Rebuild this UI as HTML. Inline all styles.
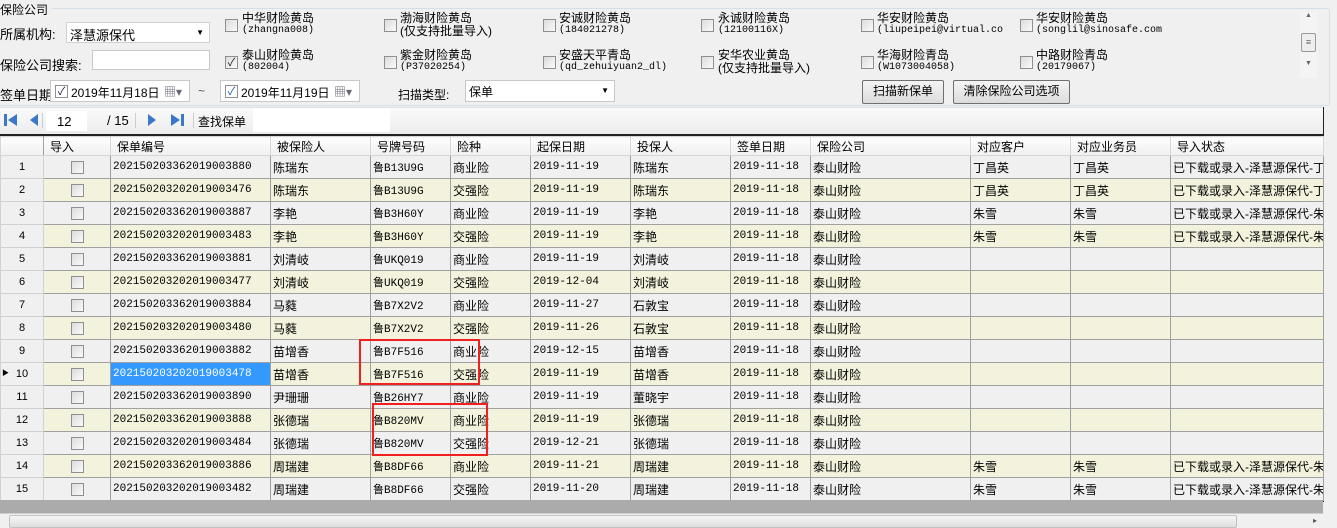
<!DOCTYPE html>
<html><head><meta charset="utf-8">
<style>
*{margin:0;padding:0;box-sizing:border-box}
body{width:1337px;height:528px;overflow:hidden;background:#f0f0f0;font-family:"Liberation Sans","Noto Sans CJK SC","WenQuanYi Zen Hei",sans-serif;font-size:12px;color:#000;position:relative}
.a{position:absolute;white-space:nowrap}
.cb{position:absolute;width:13px;height:13px;border:1px solid #8f8f8f;background:linear-gradient(135deg,#dcdcdc,#fafafa)}
.ck{font-size:11px;line-height:12px;color:#223;text-align:center}
.lbl{position:absolute;font-size:12px;line-height:13px;white-space:nowrap}
.lbl small{font-family:"Liberation Mono",monospace;font-size:10px;display:block;line-height:11px}
.inp{position:absolute;background:#fff;border:1px solid #c8c8c8}
.btn{position:absolute;border:1px solid #707070;border-radius:2px;background:linear-gradient(#f4f4f4,#dcdcdc);text-align:center;line-height:20px}
table{position:absolute;left:0;top:136px;border-collapse:collapse;table-layout:fixed;width:1323px}
td{border:1px solid #a0a0a0;height:23px;padding:0 2px;white-space:nowrap;overflow:hidden;font-size:12px}
tr.h td{height:19px;background:linear-gradient(#fdfdfd,#f0f0f0);border-color:#d6d6d6;padding-left:6px}
tr.h td:first-child{border-right-color:#a0a0a0}
tr:nth-child(odd):not(.h) td{background:#f3f2dc}
td.rh{background:#f0f0f0 !important;text-align:center;font-size:11px;border-color:#d0d0d0;position:relative}
td.m{font-family:"Liberation Mono",monospace;font-size:11px}
td.c{text-align:center}
td.sel{background:#3399ff !important;color:#fff}
.rc{position:absolute;border:2px solid #f02020}
</style></head><body>
<div class="a" style="left:0;top:8px;width:1330px;height:98px;border:1px solid #d5dfe5;border-left:none;border-radius:0 3px 3px 0"></div>
<div class="a" style="left:0;top:1px;background:#f0f0f0;padding-right:4px">保险公司</div>
<div class="a" style="left:0;top:24px;font-size:13px">所属机构:</div>
<div class="inp" style="left:66px;top:22px;width:144px;height:21px;border-color:#d0d0d0"><span class="a" style="left:3px;top:2px;font-size:13px">泽慧源保代</span><span class="a" style="right:5px;top:5px;font-size:8px">▼</span></div>
<div class="a" style="left:0;top:55px;font-size:13px">保险公司搜索:</div>
<div class="inp" style="left:92px;top:50px;width:118px;height:20px"></div>
<div class="a" style="left:0;top:85px;font-size:13px">签单日期</div>
<div class="inp" style="left:50px;top:80px;width:140px;height:22px"><div class="cb ck" style="left:4px;top:4px;background:#fff">✓</div><span class="a" style="left:20px;top:3px;font-size:12px">2019年11月18日</span><span class="a" style="left:113px;top:2px;font-size:12px;color:#667">▦▾</span></div>
<div class="inp" style="left:220px;top:80px;width:140px;height:22px"><div class="cb ck" style="left:4px;top:4px;background:#fff;color:#1a56c0">✓</div><span class="a" style="left:20px;top:3px">2019年11月19日</span><span class="a" style="left:113px;top:2px;color:#667">▦▾</span></div>
<div class="a" style="left:198px;top:84px;color:#555">~</div>
<div class="a" style="left:398px;top:86px;font-size:12px">扫描类型:</div>
<div class="inp" style="left:465px;top:80px;width:150px;height:22px"><span class="a" style="left:3px;top:2px">保单</span><span class="a" style="right:5px;top:5px;font-size:8px">▼</span></div>

<div class="cb" style="left:225px;top:19px"></div><div class="lbl" style="left:242px;top:12px">中华财险黄岛<small>(zhangna008)</small></div>
<div class="cb ck" style="left:225px;top:56px">✓</div><div class="lbl" style="left:242px;top:49px">泰山财险黄岛<small>(802004)</small></div>
<div class="cb" style="left:384px;top:19px"></div><div class="lbl" style="left:400px;top:12px">渤海财险黄岛<br>(仅支持批量导入)</div>
<div class="cb" style="left:384px;top:56px"></div><div class="lbl" style="left:400px;top:49px">紫金财险黄岛<small>(P37020254)</small></div>
<div class="cb" style="left:543px;top:19px"></div><div class="lbl" style="left:559px;top:12px">安诚财险黄岛<small>(184021278)</small></div>
<div class="cb" style="left:543px;top:56px"></div><div class="lbl" style="left:559px;top:49px">安盛天平青岛<small>(qd_zehuiyuan2_dl)</small></div>
<div class="cb" style="left:701px;top:19px"></div><div class="lbl" style="left:718px;top:12px">永诚财险黄岛<small>(12100116X)</small></div>
<div class="cb" style="left:701px;top:56px"></div><div class="lbl" style="left:718px;top:49px">安华农业黄岛<br>(仅支持批量导入)</div>
<div class="cb" style="left:861px;top:19px"></div><div class="lbl" style="left:877px;top:12px">华安财险黄岛<small>(liupeipei@virtual.co</small></div>
<div class="cb" style="left:861px;top:56px"></div><div class="lbl" style="left:877px;top:49px">华海财险青岛<small>(W1073004058)</small></div>
<div class="cb" style="left:1020px;top:19px"></div><div class="lbl" style="left:1036px;top:12px">华安财险黄岛<small>(songlil@sinosafe.com</small></div>
<div class="cb" style="left:1020px;top:56px"></div><div class="lbl" style="left:1036px;top:49px">中路财险青岛<small>(20179067)</small></div>
<div class="a" style="left:1300px;top:12px;width:17px;height:66px;background:#f4f4f4;font-size:7px;color:#666;text-align:center">▲<div style="margin:14px 1px 0;height:19px;border:1px solid #999;border-radius:2px;background:#eee;font-size:9px;line-height:16px">≡</div><div style="margin-top:8px">▼</div></div>
<div class="btn" style="left:862px;top:80px;width:82px;height:24px">扫描新保单</div>
<div class="btn" style="left:953px;top:80px;width:117px;height:24px">清除保险公司选项</div>

<div class="a" style="left:0;top:107px;width:1323px;height:28px;background:linear-gradient(#fafafa,#ececec);border-top:1px solid #d8e0e5"></div>
<div class="a" style="left:1323px;top:107px;width:1px;height:395px;background:#222"></div>
<svg class="a" style="left:3px;top:113px" width="16" height="14"><rect x="1" y="1" width="3" height="12" fill="#3a78c8"/><path d="M14 1 L5 7 L14 13Z" fill="#3a78c8"/></svg>
<svg class="a" style="left:28px;top:113px" width="12" height="14"><path d="M10 1 L2 7 L10 13Z" fill="#3a78c8"/></svg>
<div class="a" style="left:42px;top:113px;width:1px;height:15px;background:#ccc"></div>
<div class="a" style="left:46px;top:111px;width:41px;height:20px;background:#fff"><span class="a" style="left:11px;top:3px;font-size:13px">12</span></div>
<div class="a" style="left:107px;top:113px;font-size:13px">/ 15</div>
<div class="a" style="left:135px;top:113px;width:1px;height:15px;background:#ccc"></div>
<svg class="a" style="left:146px;top:113px" width="12" height="14"><path d="M2 1 L10 7 L2 13Z" fill="#3a78c8"/></svg>
<svg class="a" style="left:169px;top:113px" width="16" height="14"><path d="M2 1 L11 7 L2 13Z" fill="#3a78c8"/><rect x="12" y="1" width="3" height="12" fill="#3a78c8"/></svg>
<div class="a" style="left:193px;top:113px;width:1px;height:15px;background:#ccc"></div>
<div class="a" style="left:198px;top:113px;font-size:12px">查找保单</div>
<div class="a" style="left:253px;top:108px;width:137px;height:24px;background:#fff"></div>
<div class="a" style="left:0;top:134px;width:1323px;height:2px;background:#222"></div>

<table>
<colgroup><col style="width:43px"><col style="width:67px"><col style="width:160px"><col style="width:100px"><col style="width:80px"><col style="width:80px"><col style="width:100px"><col style="width:100px"><col style="width:80px"><col style="width:160px"><col style="width:100px"><col style="width:100px"><col style="width:153px"></colgroup>
<tr class="h"><td></td><td>导入</td><td>保单编号</td><td>被保险人</td><td>号牌号码</td><td>险种</td><td>起保日期</td><td>投保人</td><td>签单日期</td><td>保险公司</td><td>对应客户</td><td>对应业务员</td><td>导入状态</td></tr>
<tr><td class="rh">1</td><td class="c"><div class="cb" style="position:relative;display:inline-block;vertical-align:middle"></div></td><td class="m">202150203362019003880</td><td>陈瑞东</td><td class="m">鲁B13U9G</td><td>商业险</td><td class="m">2019-11-19</td><td>陈瑞东</td><td class="m">2019-11-18</td><td>泰山财险</td><td>丁昌英</td><td>丁昌英</td><td>已下载或录入-泽慧源保代-丁</td></tr>
<tr><td class="rh">2</td><td class="c"><div class="cb" style="position:relative;display:inline-block;vertical-align:middle"></div></td><td class="m">202150203202019003476</td><td>陈瑞东</td><td class="m">鲁B13U9G</td><td>交强险</td><td class="m">2019-11-19</td><td>陈瑞东</td><td class="m">2019-11-18</td><td>泰山财险</td><td>丁昌英</td><td>丁昌英</td><td>已下载或录入-泽慧源保代-丁</td></tr>
<tr><td class="rh">3</td><td class="c"><div class="cb" style="position:relative;display:inline-block;vertical-align:middle"></div></td><td class="m">202150203362019003887</td><td>李艳</td><td class="m">鲁B3H60Y</td><td>商业险</td><td class="m">2019-11-19</td><td>李艳</td><td class="m">2019-11-18</td><td>泰山财险</td><td>朱雪</td><td>朱雪</td><td>已下载或录入-泽慧源保代-朱</td></tr>
<tr><td class="rh">4</td><td class="c"><div class="cb" style="position:relative;display:inline-block;vertical-align:middle"></div></td><td class="m">202150203202019003483</td><td>李艳</td><td class="m">鲁B3H60Y</td><td>交强险</td><td class="m">2019-11-19</td><td>李艳</td><td class="m">2019-11-18</td><td>泰山财险</td><td>朱雪</td><td>朱雪</td><td>已下载或录入-泽慧源保代-朱</td></tr>
<tr><td class="rh">5</td><td class="c"><div class="cb" style="position:relative;display:inline-block;vertical-align:middle"></div></td><td class="m">202150203362019003881</td><td>刘清岐</td><td class="m">鲁UKQ019</td><td>商业险</td><td class="m">2019-11-19</td><td>刘清岐</td><td class="m">2019-11-18</td><td>泰山财险</td><td></td><td></td><td></td></tr>
<tr><td class="rh">6</td><td class="c"><div class="cb" style="position:relative;display:inline-block;vertical-align:middle"></div></td><td class="m">202150203202019003477</td><td>刘清岐</td><td class="m">鲁UKQ019</td><td>交强险</td><td class="m">2019-12-04</td><td>刘清岐</td><td class="m">2019-11-18</td><td>泰山财险</td><td></td><td></td><td></td></tr>
<tr><td class="rh">7</td><td class="c"><div class="cb" style="position:relative;display:inline-block;vertical-align:middle"></div></td><td class="m">202150203362019003884</td><td>马蕤</td><td class="m">鲁B7X2V2</td><td>商业险</td><td class="m">2019-11-27</td><td>石敦宝</td><td class="m">2019-11-18</td><td>泰山财险</td><td></td><td></td><td></td></tr>
<tr><td class="rh">8</td><td class="c"><div class="cb" style="position:relative;display:inline-block;vertical-align:middle"></div></td><td class="m">202150203202019003480</td><td>马蕤</td><td class="m">鲁B7X2V2</td><td>交强险</td><td class="m">2019-11-26</td><td>石敦宝</td><td class="m">2019-11-18</td><td>泰山财险</td><td></td><td></td><td></td></tr>
<tr><td class="rh">9</td><td class="c"><div class="cb" style="position:relative;display:inline-block;vertical-align:middle"></div></td><td class="m">202150203362019003882</td><td>苗增香</td><td class="m">鲁B7F516</td><td>商业险</td><td class="m">2019-12-15</td><td>苗增香</td><td class="m">2019-11-18</td><td>泰山财险</td><td></td><td></td><td></td></tr>
<tr><td class="rh"><span style="position:absolute;left:1px;top:5px;font-size:7px">▶</span>10</td><td class="c"><div class="cb" style="position:relative;display:inline-block;vertical-align:middle"></div></td><td class="m sel">202150203202019003478</td><td>苗增香</td><td class="m">鲁B7F516</td><td>交强险</td><td class="m">2019-11-19</td><td>苗增香</td><td class="m">2019-11-18</td><td>泰山财险</td><td></td><td></td><td></td></tr>
<tr><td class="rh">11</td><td class="c"><div class="cb" style="position:relative;display:inline-block;vertical-align:middle"></div></td><td class="m">202150203362019003890</td><td>尹珊珊</td><td class="m">鲁B26HY7</td><td>商业险</td><td class="m">2019-11-19</td><td>董晓宇</td><td class="m">2019-11-18</td><td>泰山财险</td><td></td><td></td><td></td></tr>
<tr><td class="rh">12</td><td class="c"><div class="cb" style="position:relative;display:inline-block;vertical-align:middle"></div></td><td class="m">202150203362019003888</td><td>张德瑞</td><td class="m">鲁B820MV</td><td>商业险</td><td class="m">2019-11-19</td><td>张德瑞</td><td class="m">2019-11-18</td><td>泰山财险</td><td></td><td></td><td></td></tr>
<tr><td class="rh">13</td><td class="c"><div class="cb" style="position:relative;display:inline-block;vertical-align:middle"></div></td><td class="m">202150203202019003484</td><td>张德瑞</td><td class="m">鲁B820MV</td><td>交强险</td><td class="m">2019-12-21</td><td>张德瑞</td><td class="m">2019-11-18</td><td>泰山财险</td><td></td><td></td><td></td></tr>
<tr><td class="rh">14</td><td class="c"><div class="cb" style="position:relative;display:inline-block;vertical-align:middle"></div></td><td class="m">202150203362019003886</td><td>周瑞建</td><td class="m">鲁B8DF66</td><td>商业险</td><td class="m">2019-11-21</td><td>周瑞建</td><td class="m">2019-11-18</td><td>泰山财险</td><td>朱雪</td><td>朱雪</td><td>已下载或录入-泽慧源保代-朱</td></tr>
<tr><td class="rh">15</td><td class="c"><div class="cb" style="position:relative;display:inline-block;vertical-align:middle"></div></td><td class="m">202150203202019003482</td><td>周瑞建</td><td class="m">鲁B8DF66</td><td>交强险</td><td class="m">2019-11-20</td><td>周瑞建</td><td class="m">2019-11-18</td><td>泰山财险</td><td>朱雪</td><td>朱雪</td><td>已下载或录入-泽慧源保代-朱</td></tr>
</table>
<div class="a" style="left:0;top:500px;width:1323px;height:13px;background:#ababab"></div>
<div class="a" style="left:0;top:513px;width:1323px;height:15px;background:#f0f0f0;border-top:1px solid #ccc"></div>
<div class="a" style="left:9px;top:515px;width:1228px;height:13px;border:1px solid #c2c2c2;border-radius:2px;background:linear-gradient(#f6f6f6,#dedede)"></div>
<div class="a" style="left:1313px;top:516px;font-size:8px;color:#555">▸</div>
<div class="rc" style="left:359px;top:339px;width:121px;height:46px"></div>
<div class="rc" style="left:372px;top:403px;width:116px;height:53px"></div>
</body></html>
